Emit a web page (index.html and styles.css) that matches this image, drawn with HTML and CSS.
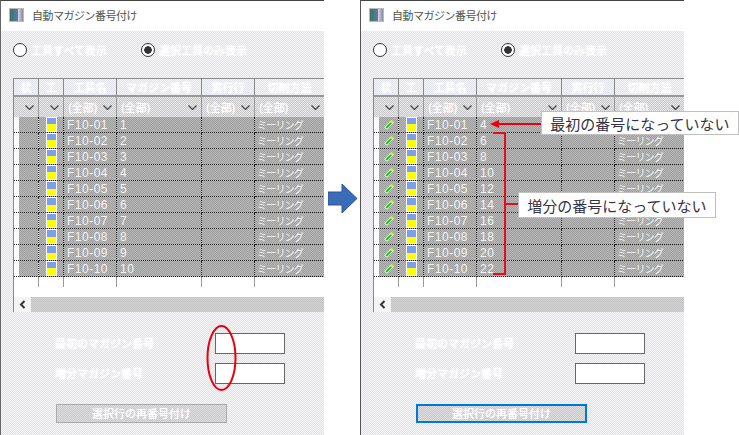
FILE: index.html
```html
<!DOCTYPE html>
<html lang="ja">
<head>
    <meta charset="utf-8">
    <title>自動マガジン番号付け</title>
    <link rel="stylesheet" href="styles.css">
</head>
<body>
<svg class="defs" width="0" height="0">
    <symbol id="chev" viewBox="0 0 9 5"><polyline points="0.5,0.5 4.5,4.5 8.5,0.5" fill="none" stroke="#444" stroke-width="1.2"/></symbol>
    <symbol id="pen" viewBox="0 0 10 10"><path d="M1.5 8.5 L8.5 1.5" stroke="#fff" stroke-width="3.6"/><path d="M2 8 L8 2" stroke="#16c010" stroke-width="1.8"/><path d="M7 3 L9 1" stroke="#e8f020" stroke-width="1.4"/></symbol>
</svg>
<div class="page">
    <div class="window">
        <div class="title"><span class="appicon"></span>自動マガジン番号付け</div>
        <div class="radios">
            <label class="radio"><span class="dot"></span>工具すべて表示</label>
            <label class="radio"><span class="dot on"></span>選択工具のみ表示</label>
        </div>
        <div class="grid">
            <table>
                <colgroup><col class="c1"><col class="c2"><col class="c3"><col class="c4"><col class="c5"><col class="c6"></colgroup>
                <tr class="head"><th>状</th><th>工</th><th>工具名</th><th>マガジン番号</th><th>実行行</th><th>切削方法</th></tr>
                <tr class="filter">
                    <td><div><i></i><svg><use href="#chev"/></svg></div></td>
                    <td><div><i></i><svg><use href="#chev"/></svg></div></td>
                    <td><div>(全部)<svg><use href="#chev"/></svg></div></td>
                    <td><div>(全部)<svg><use href="#chev"/></svg></div></td>
                    <td><div>(全部)<svg><use href="#chev"/></svg></div></td>
                    <td><div>(全部)<svg><use href="#chev"/></svg></div></td>
                </tr>
                <tr class="row"><td></td><td><span class="tool"></span></td><td>F10-01</td><td>1</td><td></td><td class="kana">ミーリング</td></tr>
                <tr class="row"><td></td><td><span class="tool"></span></td><td>F10-02</td><td>2</td><td></td><td class="kana">ミーリング</td></tr>
                <tr class="row"><td></td><td><span class="tool"></span></td><td>F10-03</td><td>3</td><td></td><td class="kana">ミーリング</td></tr>
                <tr class="row"><td></td><td><span class="tool"></span></td><td>F10-04</td><td>4</td><td></td><td class="kana">ミーリング</td></tr>
                <tr class="row"><td></td><td><span class="tool"></span></td><td>F10-05</td><td>5</td><td></td><td class="kana">ミーリング</td></tr>
                <tr class="row"><td></td><td><span class="tool"></span></td><td>F10-06</td><td>6</td><td></td><td class="kana">ミーリング</td></tr>
                <tr class="row"><td></td><td><span class="tool"></span></td><td>F10-07</td><td>7</td><td></td><td class="kana">ミーリング</td></tr>
                <tr class="row"><td></td><td><span class="tool"></span></td><td>F10-08</td><td>8</td><td></td><td class="kana">ミーリング</td></tr>
                <tr class="row"><td></td><td><span class="tool"></span></td><td>F10-09</td><td>9</td><td></td><td class="kana">ミーリング</td></tr>
                <tr class="row"><td></td><td><span class="tool"></span></td><td>F10-10</td><td>10</td><td></td><td class="kana">ミーリング</td></tr>
                <tr class="ticks"><td></td><td></td><td></td><td></td><td></td><td></td></tr>
            </table>
            <div class="hscroll"><span class="sbtn"><svg width="7" height="9" viewBox="0 0 7 9"><polyline points="5.5,1 2,4.5 5.5,8" fill="none" stroke="#333" stroke-width="2"/></svg></span></div>
        </div>
        <div class="field"><label>最初のマガジン番号</label><input type="text"></div>
        <div class="field"><label>増分マガジン番号</label><input type="text"></div>
        <button class="renum">選択行の再番号付け</button>
    </div>

    <div class="gutter">
        <svg width="30" height="30" viewBox="0 0 30 30"><path d="M0 8 H14 V0 L29 14.5 L14 29 V21 H0 Z" fill="#3a6cb8" stroke="#2f5597"/></svg>
    </div>

    <div class="window second">
        <div class="title"><span class="appicon"></span>自動マガジン番号付け</div>
        <div class="radios">
            <label class="radio"><span class="dot"></span>工具すべて表示</label>
            <label class="radio"><span class="dot on"></span>選択工具のみ表示</label>
        </div>
        <div class="grid">
            <table>
                <colgroup><col class="c1"><col class="c2"><col class="c3"><col class="c4"><col class="c5"><col class="c6"></colgroup>
                <tr class="head"><th>状</th><th>工</th><th>工具名</th><th>マガジン番号</th><th>実行行</th><th>切削方法</th></tr>
                <tr class="filter">
                    <td><div><i></i><svg><use href="#chev"/></svg></div></td>
                    <td><div><i></i><svg><use href="#chev"/></svg></div></td>
                    <td><div>(全部)<svg><use href="#chev"/></svg></div></td>
                    <td><div>(全部)<svg><use href="#chev"/></svg></div></td>
                    <td><div>(全部)<svg><use href="#chev"/></svg></div></td>
                    <td><div>(全部)<svg><use href="#chev"/></svg></div></td>
                </tr>
                <tr class="row"><td><svg class="pen"><use href="#pen"/></svg></td><td><span class="tool"></span></td><td>F10-01</td><td>4</td><td></td><td class="kana">ミーリング</td></tr>
                <tr class="row"><td><svg class="pen"><use href="#pen"/></svg></td><td><span class="tool"></span></td><td>F10-02</td><td>6</td><td></td><td class="kana">ミーリング</td></tr>
                <tr class="row"><td><svg class="pen"><use href="#pen"/></svg></td><td><span class="tool"></span></td><td>F10-03</td><td>8</td><td></td><td class="kana">ミーリング</td></tr>
                <tr class="row"><td><svg class="pen"><use href="#pen"/></svg></td><td><span class="tool"></span></td><td>F10-04</td><td>10</td><td></td><td class="kana">ミーリング</td></tr>
                <tr class="row"><td><svg class="pen"><use href="#pen"/></svg></td><td><span class="tool"></span></td><td>F10-05</td><td>12</td><td></td><td class="kana">ミーリング</td></tr>
                <tr class="row"><td><svg class="pen"><use href="#pen"/></svg></td><td><span class="tool"></span></td><td>F10-06</td><td>14</td><td></td><td class="kana">ミーリング</td></tr>
                <tr class="row"><td><svg class="pen"><use href="#pen"/></svg></td><td><span class="tool"></span></td><td>F10-07</td><td>16</td><td></td><td class="kana">ミーリング</td></tr>
                <tr class="row"><td><svg class="pen"><use href="#pen"/></svg></td><td><span class="tool"></span></td><td>F10-08</td><td>18</td><td></td><td class="kana">ミーリング</td></tr>
                <tr class="row"><td><svg class="pen"><use href="#pen"/></svg></td><td><span class="tool"></span></td><td>F10-09</td><td>20</td><td></td><td class="kana">ミーリング</td></tr>
                <tr class="row"><td><svg class="pen"><use href="#pen"/></svg></td><td><span class="tool"></span></td><td>F10-10</td><td>22</td><td></td><td class="kana">ミーリング</td></tr>
                <tr class="ticks"><td></td><td></td><td></td><td></td><td></td><td></td></tr>
            </table>
            <div class="hscroll"><span class="sbtn"><svg width="7" height="9" viewBox="0 0 7 9"><polyline points="5.5,1 2,4.5 5.5,8" fill="none" stroke="#333" stroke-width="2"/></svg></span></div>
        </div>
        <div class="field"><label>最初のマガジン番号</label><input type="text"></div>
        <div class="field"><label>増分マガジン番号</label><input type="text"></div>
        <button class="renum focused">選択行の再番号付け</button>
    </div>

    <!-- 注釈 -->
    <svg class="marks" width="739" height="435" viewBox="0 0 739 435">
        <ellipse cx="221.5" cy="358" rx="14" ry="32" fill="none" stroke="#e8000c" stroke-width="2"/>
        <path d="M541 124 H496" stroke="#e8000c" stroke-width="2" fill="none"/>
        <path d="M490 124 L499 120 V128 Z" fill="#e8000c"/>
        <path d="M493 133 H505 V274 H493 M505 204 H518" stroke="#e0101c" stroke-width="2" fill="none"/>
    </svg>
    <div class="note first">最初の番号になっていない</div>
    <div class="note inc">増分の番号になっていない</div>
</div>
</body>
</html>
```

FILE: styles.css
```css
*{margin: 0;padding: 0;box-sizing: border-box;}
body{background: #fff;font-family: "Noto Sans CJK JP","Liberation Sans",sans-serif;font-size: 12px;overflow: hidden;}
.defs{display: block;height: 0;}
.page{position: relative;display: flex;width: 739px;height: 435px;overflow: hidden;}

.window{width: 324px;height: 435px;border-left: 1px solid #666;border-top: 1px solid #444;
    background: repeating-conic-gradient(#e0e1ea 0 25%, #f6f6f8 0 50%) 0 0/2px 2px;}
.window.second{border-left-color: #555;}
.gutter{width: 36px;display: flex;justify-content: center;padding: 184px 0 0 1px;}

.title{display: flex;align-items: center;height: 30px;padding: 0 0 2px 8px;background: #fff;color: #554;font-size: 11px;letter-spacing: -.5px;}
.appicon{width: 15px;height: 14px;margin-right: 8px;border: 1px solid #b8b8c0;
    background: linear-gradient(90deg,#40706c 0,#5a7ea0 60%,#dde 60%,#889 100%);}

.radios{display: flex;padding: 12px 0 0 12px;height: 47px;}
.radio{display: flex;align-items: flex-start;width: 128px;color: #fff;font-size: 11px;line-height: 14px;text-shadow: 0 0 2px #fff,0 0 2px #fff;}
.dot{width: 14px;height: 14px;margin-right: 4px;border: 1px solid #333;border-radius: 50%;background: #fff;flex: none;}
.dot.on{background: radial-gradient(circle,#333 0 3.5px,#fff 4px);}

.grid{margin-left: 12px;height: 234px;background: #fff;border-left: 1px solid #888;overflow: hidden;}
table{border-collapse: separate;border-spacing: 0;table-layout: fixed;width: 311px;}
.c1,.c2{width: 25px;}
.c3{width: 53px;}
.c4{width: 85px;}
.c5{width: 53px;}
.c6{width: 70px;}

.head th{height: 19px;border-top: 1px solid #8a8a8a;border-right: 1px solid #8a8a8a;border-bottom: 2px solid #999;
    background: repeating-conic-gradient(#e0e1ea 0 25%, #f6f6f8 0 50%) 0 0/2px 2px;
    color: #fff;font-size: 11px;font-weight: normal;text-shadow: 0 0 2px #fff,0 0 2px #fff;white-space: nowrap;overflow: hidden;}
.filter td{height: 20px;border-right: 1px solid #999;
    background: repeating-conic-gradient(#c8c8ca 0 25%, #e8e8ea 0 50%) 0 0/2px 2px;
    color: #fff;font-size: 11px;text-shadow: 0 0 1px #fff;}
.filter div{display: flex;justify-content: space-between;align-items: center;padding: 0 4px 0 4px;}
.filter svg{width: 9px;height: 5px;flex: none;}

.row td{height: 16px;padding-left: 3px;border-right: 1px dotted #222;border-bottom: 1px dotted #222;
    background: repeating-conic-gradient(#9e9e9e 0 25%, #b8b8b8 0 50%) 0 0/2px 2px;
    color: #f4f4f4;font: 12px/14px "Liberation Sans",sans-serif;letter-spacing: .5px;white-space: nowrap;overflow: hidden;}
.row td:first-child{background: linear-gradient(90deg,#fff 5px,transparent 5px),repeating-conic-gradient(#9e9e9e 0 25%, #b8b8b8 0 50%) 0 0/2px 2px;padding-left: 10px;}
.row td:nth-child(2){padding-left: 7px;}
.row td.kana{font: 10px/14px "Noto Sans CJK JP",sans-serif;letter-spacing: -.8px;padding-left: 2px;border-right: 0;}
.tool{display: block;width: 11px;height: 15px;border: 1px solid #fff;background: linear-gradient(#7f9fe8 0 50%,#ffff00 50%);}
.pen{display: block;width: 10px;height: 10px;}

.ticks td{height: 10px;border-right: 1px solid #999;}
.ticks td:last-child{border-right: 0;}
.hscroll{display: flex;height: 15px;margin-top: 10px;background: repeating-conic-gradient(#c4c4c4 0 25%, #d2d2d2 0 50%) 0 0/2px 2px;}
.sbtn{display: flex;align-items: center;justify-content: center;width: 17px;background: #f4f4f4;}

.field{display: flex;align-items: center;height: 20px;margin-top: 10px;padding-left: 54px;}
.grid + .field{margin-top: 21px;}
.field label{width: 160px;color: #fff;font-size: 11px;text-shadow: 0 0 2px #fff,0 0 2px #fff;}
.field input{width: 70px;height: 21px;border: 1px solid #666;background: #fff;border-radius: 0;}

.renum{display: block;width: 171px;height: 19px;margin: 21px 0 0 55px;border: 1px solid #aaa;
    background: repeating-conic-gradient(#c8c8ca 0 25%, #dedee0 0 50%) 0 0/2px 2px;
    color: #fff;font: 11px/15px "Noto Sans CJK JP",sans-serif;text-shadow: 0 0 1px #fff;}
.renum.focused{border: 2px solid #0078d7;}

.marks{position: absolute;left: 0;top: 0;pointer-events: none;}
.note{position: absolute;display: flex;align-items: center;justify-content: center;width: 198px;background: #fff;border: 1px solid #c0c0c0;
    color: #334;font-size: 15px;white-space: nowrap;}
.note.first{left: 541px;top: 111px;height: 24px;}
.note.inc{left: 518px;top: 192px;height: 26px;}
```
